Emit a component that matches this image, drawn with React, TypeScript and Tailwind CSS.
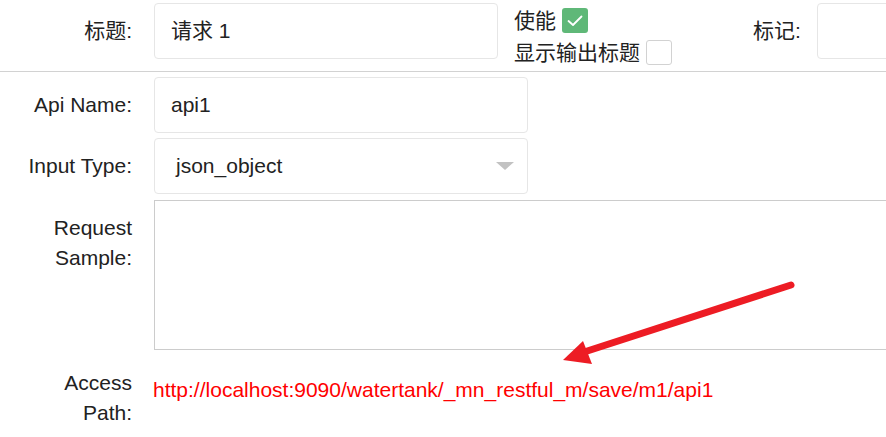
import React from "react";

const font = { fontFamily: '"Liberation Sans", Arial, "Noto Sans CJK SC", sans-serif' };

function Label({ children, className = "" }: { children: React.ReactNode; className?: string }) {
  return (
    <div className={"w-[132px] shrink-0 whitespace-nowrap text-right text-[21px] leading-[30px] text-[#222] " + className}>
      {children}
    </div>
  );
}

function Check({ checked }: { checked: boolean }) {
  return checked ? (
    <span className="flex h-[25px] w-[26px] shrink-0 items-center justify-center rounded-[3px] bg-[#5fb878]">
      <svg width="16" height="12" viewBox="0 0 16 12" fill="none">
        <path d="M1.5 6 L6 10 L14.5 1.5" stroke="white" strokeWidth="1.8" strokeLinecap="round" strokeLinejoin="round" />
      </svg>
    </span>
  ) : (
    <span className="block h-[25px] w-[26px] shrink-0 rounded-[3px] border border-[#d2d2d2] bg-white" />
  );
}

export default function App() {
  return (
    <div className="relative h-[437px] w-[886px] overflow-hidden bg-white" style={font}>
      {/* top row */}
      <div className="flex items-start pt-[3px]">
        <div className="flex h-[56px] shrink-0 items-center">
          <Label>标题:</Label>
        </div>
        <div className="ml-[22px] flex h-[56px] w-[344px] shrink-0 items-center rounded-[4px] border border-[#e6e6e6] pl-[16px] text-[21px] text-[#222]">
          请求 1
        </div>
        <div className="ml-[16px] flex shrink-0 flex-col gap-[7px] pt-[5px] whitespace-nowrap text-[21px] leading-[25px] text-[#222]">
          <div className="flex items-center gap-[6px]">
            <span>使能</span>
            <Check checked />
          </div>
          <div className="flex items-center gap-[6px]">
            <span>显示输出标题</span>
            <Check checked={false} />
          </div>
        </div>
        <div className="ml-[81px] flex h-[56px] shrink-0 items-center whitespace-nowrap text-[21px] text-[#222]">标记:</div>
        <div className="ml-[16px] h-[56px] w-[120px] shrink-0 rounded-[4px] border border-[#e6e6e6]" />
      </div>

      <div className="mt-[6px] h-px w-full bg-[#d2d2d2]" />

      {/* Api Name */}
      <div className="mt-[5px] flex items-center">
        <Label>Api Name:</Label>
        <div className="ml-[22px] flex h-[56px] w-[374px] shrink-0 items-center rounded-[4px] border border-[#e6e6e6] pl-[16px] text-[21px] text-[#222]">
          api1
        </div>
      </div>

      {/* Input Type */}
      <div className="mt-[5px] flex items-center">
        <Label>Input Type:</Label>
        <div className="ml-[22px] flex h-[56px] w-[374px] shrink-0 items-center justify-between rounded-[4px] border border-[#e6e6e6] pl-[21px] pr-[13px] text-[21px] text-[#222]">
          <span>json_object</span>
          <svg width="18" height="8" viewBox="0 0 18 8">
            <polygon points="0,0 18,0 9,8" fill="#c2c2c2" />
          </svg>
        </div>
      </div>

      {/* Request Sample */}
      <div className="mt-[6px] flex items-start">
        <Label className="pt-[13px]">
          Request
          <br />
          Sample:
        </Label>
        <div className="ml-[22px] mr-[-10px] h-[150px] flex-1 border border-[#cccccc]" />
      </div>

      {/* Access Path */}
      <div className="mt-[18px] flex items-start">
        <Label>
          Access
          <br />
          Path:
        </Label>
        <div className="ml-[21px] shrink-0 whitespace-nowrap pt-[7px] text-[21px] leading-[30px] text-[#ff0000]">
          http://localhost:9090/watertank/_mn_restful_m/save/m1/api1
        </div>
      </div>

      {/* annotation arrow */}
      <svg className="pointer-events-none absolute left-0 top-0" width="886" height="437">
        <line x1="791" y1="285" x2="578" y2="354" stroke="#ed1c24" strokeWidth="7" strokeLinecap="round" />
        <polygon points="563,360 583,341 592,364" fill="#ed1c24" />
      </svg>
    </div>
  );
}
